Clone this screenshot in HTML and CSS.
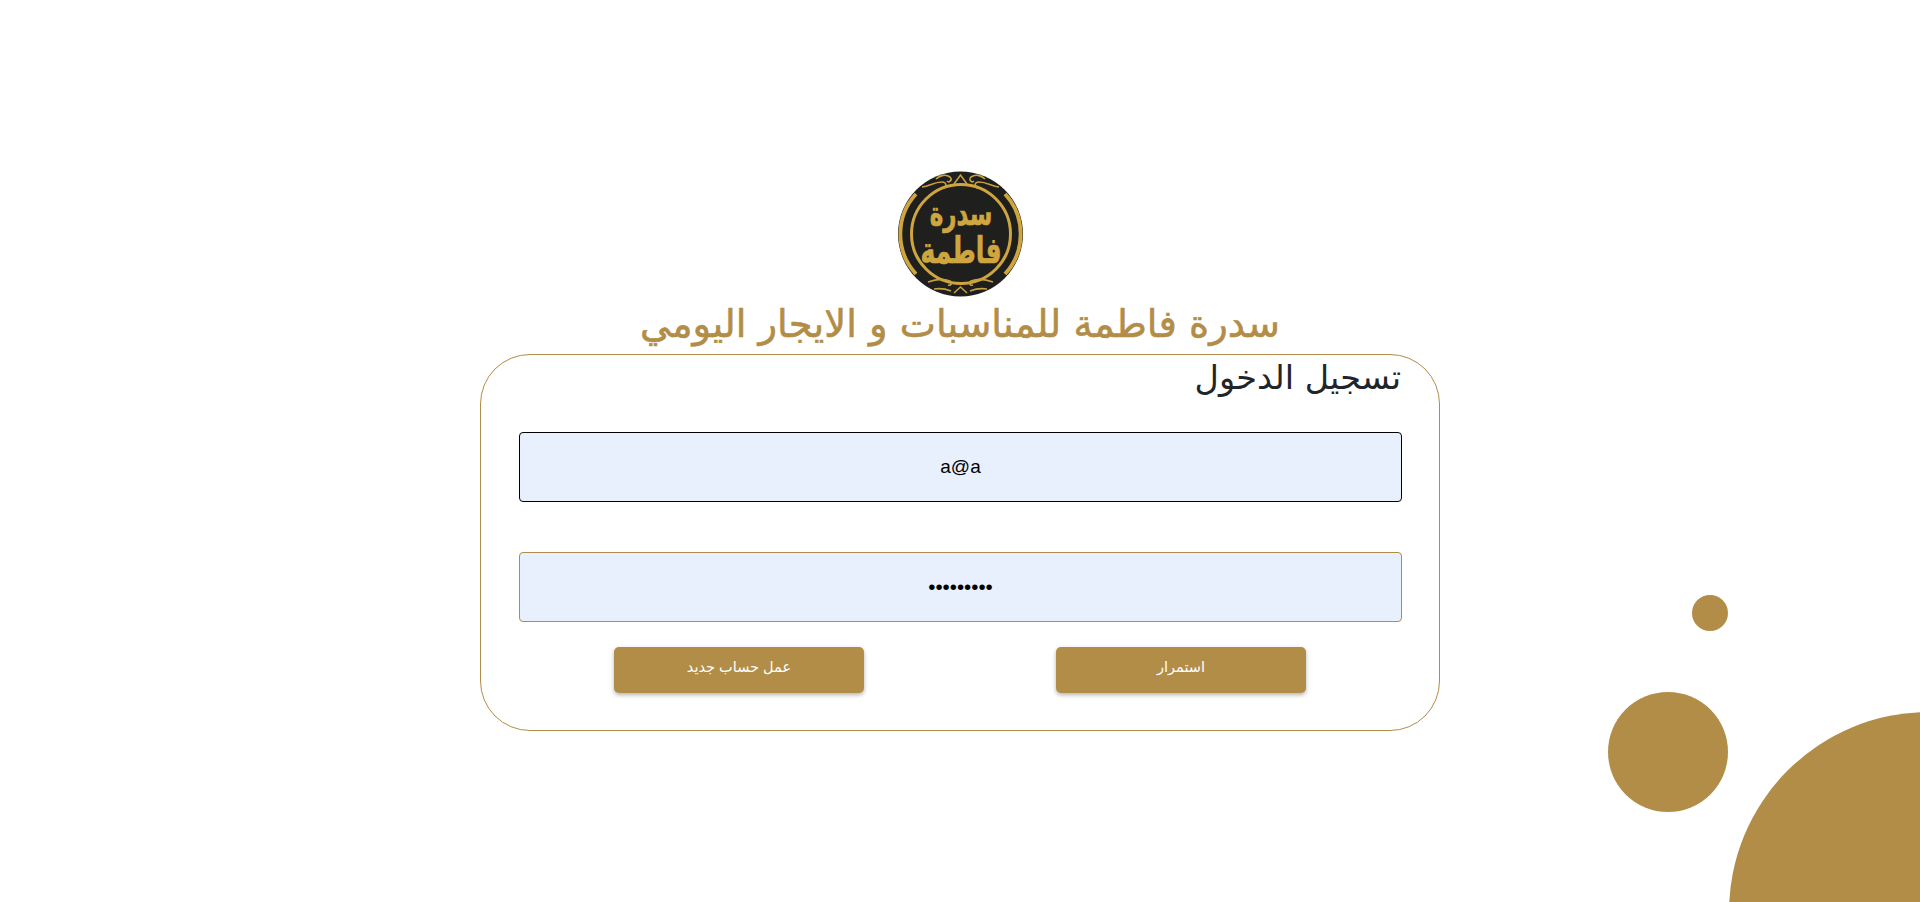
FILE: index.html
```html
<!DOCTYPE html>
<html lang="ar" dir="rtl">
<head>
<meta charset="utf-8">
<title>تسجيل الدخول</title>
<link rel="stylesheet" href="styles.css">
</head>
<body>
<div class="decor">
  <div class="dot dot-small"></div>
  <div class="dot dot-medium"></div>
  <div class="dot dot-large"></div>
</div>
<main class="page">
  <svg class="logo" viewBox="0 0 125 126" role="img" aria-label="سدرة فاطمة">
    <circle cx="62.5" cy="63" r="62.5" fill="#1f1f1d"/>
    <circle cx="63" cy="63" r="49.5" fill="none" stroke="#cfa53f" stroke-width="3"/>
    <path d="M18 23A59 59 0 0 0 18 103M107 23A59 59 0 0 1 107 103" fill="none" stroke="#cfa53f" stroke-width="3.8"/>
    <path d="M24 16c8-1 12-5 20-5 5 0 5 6 1 6M101 16c-8-1-12-5-20-5-5 0-5 6-1 6M38 8c4-4 10-5 14-2 3 3-1 6-3 4M87 8c-4-4-10-5-14-2-3 3 1 6 3 4M56 13l6.500-9 6.500 9M30 111c8-3 14-4 22-1 3 2 1 5-2 4M95 111c-8-3-14-4-22-1-3 2-1 5 2 4M36 118c6-1 12 0 17 2M89 118c-6-1-12 0-17 2M56 122l6.500-6 6.500 6" fill="none" stroke="#c9a03f" stroke-width="1.600"/>
    <text class="logo-text logo-top" transform="translate(63 54) scale(1 1.45)" text-anchor="middle">سدرة</text>
    <text class="logo-text logo-bottom" transform="translate(63 92) scale(1 1.45)" text-anchor="middle">فاطمة</text>
  </svg>
  <h1 class="title">سدرة فاطمة للمناسبات و الايجار اليومي</h1>
  <form class="card">
    <h2 class="card-title">تسجيل الدخول</h2>
    <input class="field field-focus" type="text" value="a@a" aria-label="email">
    <input class="field field-pass" type="password" value="123456789" aria-label="password">
    <div class="actions">
      <button class="btn" type="button">استمرار</button>
      <button class="btn" type="button">عمل حساب جديد</button>
    </div>
  </form>
</main>
</body>
</html>
```
FILE: styles.css
```css
* { box-sizing: border-box; }
html, body { margin: 0; height: 902px; overflow: hidden; background: #fff; }
body { font-family: "DejaVu Sans", sans-serif; position: relative; }
.page { position: relative; display: flex; flex-direction: column; align-items: center; padding-top: 171px; }
.logo { width: 125px; height: 126px; display: block; }
.logo-text { fill: #cfa53f; stroke: #cfa53f; stroke-width: .5px; font-family: "DejaVu Sans", sans-serif; font-weight: 700; }
.logo-top { font-size: 23px; }
.logo-bottom { font-size: 25px; }
.title { margin: 0; height: 57px; font-size: 38.400px; line-height: 53px; font-weight: 400; color: #b28d47; white-space: nowrap; -webkit-text-stroke: .6px #b28d47; }
.card { width: 960px; height: 377px; border: 1px solid #b28d47; border-radius: 50px; padding: 0 37px 0 38px; display: flex; flex-direction: column; }
.card-title { margin: 0; height: 77px; padding-right: 1px; font-size: 33.500px; line-height: 46px; font-weight: 400; color: #212529; }
.field { display: block; width: 100%; height: 70px; margin-bottom: 50px; border: 1px solid #b28d47; border-radius: 4px; background: #e8f0fe; text-align: center; font-size: 19px; font-family: "Liberation Sans", sans-serif; color: #000; outline: none; }
.field-focus { border-color: #000; }
.field-pass { font-size: 20.500px; }
.actions { display: flex; justify-content: center; gap: 192px; margin-top: -25px; padding-right: 1px; }
.btn { width: 250px; height: 46px; padding: 0 0 6px; border: 0; border-radius: 5px; background: #b28d47; color: #fff; font-size: 14.500px; font-family: "Liberation Sans", "DejaVu Sans", sans-serif; box-shadow: 0 2px 4px rgba(0,0,0,.3); }
.decor { position: absolute; inset: 0; overflow: hidden; }
.dot { position: absolute; border-radius: 50%; background: #b28d47; }
.dot-small { left: 1692px; top: 595px; width: 36px; height: 36px; }
.dot-medium { left: 1608px; top: 692px; width: 120px; height: 120px; }
.dot-large { left: 1729px; top: 712px; width: 400px; height: 400px; }
```
